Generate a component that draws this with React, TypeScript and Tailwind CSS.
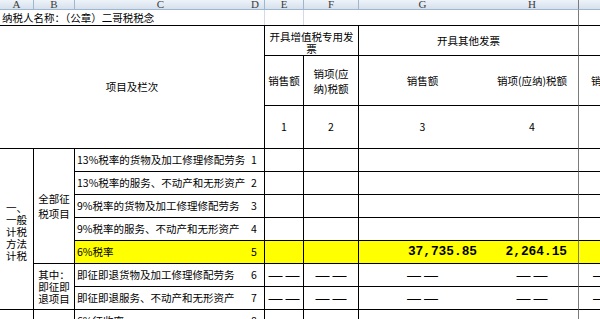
const COLS = ["A", "B", "C", "D", "E", "F", "G", "H", "I"];

const ROWS = [
  { label: "13%税率的货物及加工修理修配劳务", no: "1" },
  { label: "13%税率的服务、不动产和无形资产", no: "2" },
  { label: "9%税率的货物及加工修理修配劳务", no: "3" },
  { label: "9%税率的服务、不动产和无形资产", no: "4" },
  { label: "6%税率", no: "5", sales: "37,735.85", tax: "2,264.15", hl: true },
  { label: "即征即退货物及加工修理修配劳务", no: "6", dash: true },
  { label: "即征即退服务、不动产和无形资产", no: "7", dash: true },
  { label: "6%征收率", no: "8" },
];

// full class names for grid rows of the data area
const ROW_START = [
  "row-start-6",
  "row-start-7",
  "row-start-8",
  "row-start-9",
  "row-start-10",
  "row-start-11",
  "row-start-12",
  "row-start-13",
];

const HEAD_COL = [
  "col-start-1",
  "col-start-2 border-l",
  "col-start-3 border-l",
  "col-start-4",
  "col-start-5 border-l",
  "col-start-6 border-l",
  "col-start-7 border-l",
  "col-start-8",
  "col-start-9 border-l border-l-[#7a7a7a]",
];

function Dash() {
  return (
    <span className="flex gap-[3px] font-['Liberation_Sans',sans-serif] text-[14px] leading-[12px]">
      <span>—</span>
      <span>—</span>
    </span>
  );
}

export default function App() {
  return (
    <div className="w-[600px] h-[319px] overflow-hidden bg-white text-black font-['Noto_Sans_CJK_SC',sans-serif] text-[10.5px] leading-[12px]">
      <div className="grid grid-cols-[33px_41px_172px_18px_39px_55px_128px_92px_60px] grid-rows-[10px_15px_30px_50px_43px_23px_23px_23px_23px_23px_23px_23px_23px]">
        {/* column letters */}
        {COLS.map((c, i) => (
          <div
            key={c}
            className={`row-start-1 ${HEAD_COL[i]} flex items-end justify-center overflow-hidden border-b border-[#9eb6ce] bg-linear-to-b from-[#eef3f9] to-[#d6e0ec] font-['Liberation_Serif',serif] text-[11px] leading-[10px] text-[#3a3a3a]`}
          >
            {c}
          </div>
        ))}

        {/* title row */}
        <div className="row-start-2 col-start-1 col-span-4 flex items-center whitespace-nowrap pl-[2px]">
          纳税人名称：（公章）二哥税税念
        </div>
        <div className="row-start-2 col-start-5 border-l border-[#d3dae6]" />
        <div className="row-start-2 col-start-6 border-l border-[#d3dae6]" />
        <div className="row-start-2 col-start-7 col-span-2" />
        <div className="row-start-2 col-start-9 border-l border-[#7a7a7a]" />

        {/* header block */}
        <div className="row-start-3 row-span-3 col-start-1 col-span-4 flex items-center justify-center border-t border-black">
          项目及栏次
        </div>
        <div className="row-start-3 col-start-5 col-span-2 flex flex-col items-center justify-end border-t border-l border-black">
          <span>开具增值税专用发</span>
          <span>票</span>
        </div>
        <div className="row-start-3 col-start-7 col-span-2 flex items-center justify-center border-t border-l border-black">
          开具其他发票
        </div>
        <div className="row-start-3 col-start-9 border-t border-l border-black border-l-[#7a7a7a]" />

        <div className="row-start-4 col-start-5 flex items-center justify-center border-t border-l border-black">
          销售额
        </div>
        <div className="row-start-4 col-start-6 flex flex-col items-center justify-center border-t border-l border-black leading-[15px]">
          <span>销项(应</span>
          <span>纳)税额</span>
        </div>
        <div className="row-start-4 col-start-7 flex items-center justify-center border-t border-l border-black">
          销售额
        </div>
        <div className="row-start-4 col-start-8 flex items-center justify-center border-t border-black">
          销项(应纳)税额
        </div>
        <div className="row-start-4 col-start-9 flex items-center justify-start pl-[12px] border-t border-l border-black border-l-[#7a7a7a] whitespace-nowrap">
          销售额
        </div>

        <div className="row-start-5 col-start-5 flex items-center justify-center border-t border-l border-black">
          1
        </div>
        <div className="row-start-5 col-start-6 flex items-center justify-center border-t border-l border-black">
          2
        </div>
        <div className="row-start-5 col-start-7 flex items-center justify-center border-t border-l border-black">
          3
        </div>
        <div className="row-start-5 col-start-8 flex items-center justify-center border-t border-black">
          4
        </div>
        <div className="row-start-5 col-start-9 border-t border-l border-black border-l-[#7a7a7a]" />

        {/* left merged labels */}
        <div className="row-start-6 row-span-7 col-start-1 flex flex-col items-center justify-center border-t border-black pt-[5px]">
          <span>一、</span>
          <span>一般</span>
          <span>计税</span>
          <span>方法</span>
          <span>计税</span>
        </div>
        <div className="row-start-6 row-span-5 col-start-2 flex flex-col items-center justify-center border-t border-l border-black leading-[15px]">
          <span>全部征</span>
          <span>税项目</span>
        </div>
        <div className="row-start-11 row-span-2 col-start-2 flex flex-col items-center justify-center border-t border-l border-black">
          <span>其中：</span>
          <span>即征即</span>
          <span>退项目</span>
        </div>
        <div className="row-start-13 col-start-1 border-t border-black" />
        <div className="row-start-13 col-start-2 border-t border-l border-black" />

        {/* data rows */}
        {ROWS.map((r, i) => {
          const rs = ROW_START[i];
          const bg = r.hl ? "bg-[#ffff00]" : "";
          return [
            <div
              key={`c${i}`}
              className={`${rs} col-start-3 flex items-center whitespace-nowrap pl-[2px] border-t border-l border-black ${bg}`}
            >
              {r.label}
            </div>,
            <div
              key={`d${i}`}
              className={`${rs} col-start-4 flex items-center justify-center pr-[2px] border-t border-black ${bg}`}
            >
              {r.no}
            </div>,
            <div
              key={`e${i}`}
              className={`${rs} col-start-5 flex items-center justify-center border-t border-l border-black ${bg}`}
            >
              {r.dash && <Dash />}
            </div>,
            <div
              key={`f${i}`}
              className={`${rs} col-start-6 flex items-center justify-center border-t border-l border-black ${bg}`}
            >
              {r.dash && <Dash />}
            </div>,
            <div
              key={`g${i}`}
              className={`${rs} col-start-7 flex items-center ${r.sales ? "justify-end pr-[9px]" : "justify-center"} border-t border-l border-black ${bg}`}
            >
              {r.dash && <Dash />}
              {r.sales && (
                <span className="font-['Liberation_Mono',monospace] font-bold text-[12.8px]">
                  {r.sales}
                </span>
              )}
            </div>,
            <div
              key={`h${i}`}
              className={`${rs} col-start-8 flex items-center ${r.tax ? "justify-end pr-[11px]" : "justify-center"} border-t border-black ${bg}`}
            >
              {r.dash && <Dash />}
              {r.tax && (
                <span className="font-['Liberation_Mono',monospace] font-bold text-[12.8px]">
                  {r.tax}
                </span>
              )}
            </div>,
            <div
              key={`i${i}`}
              className={`${rs} col-start-9 flex items-center justify-center border-t border-l border-black border-l-[#7a7a7a] ${bg}`}
            >
              {r.dash && <Dash />}
            </div>,
          ];
        })}
      </div>
    </div>
  );
}
